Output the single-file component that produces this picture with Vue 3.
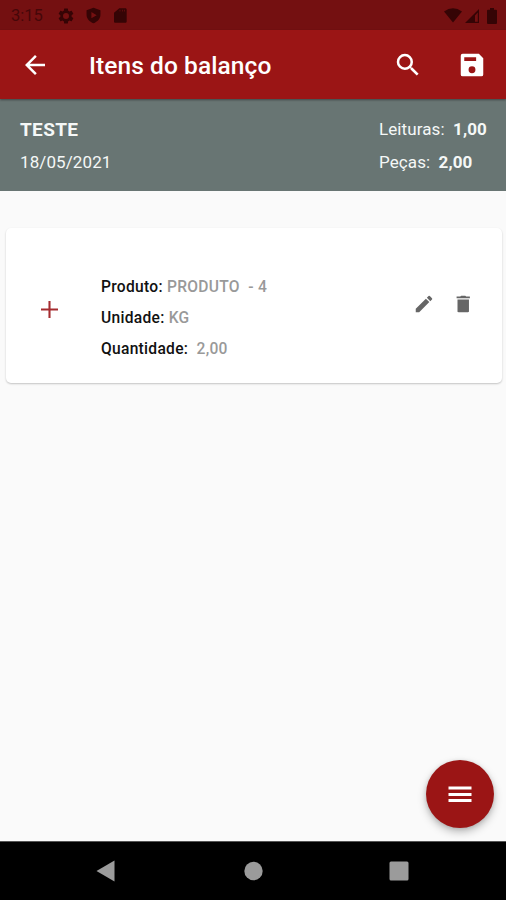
<script setup>
const stats = [
  { label: 'Leituras:', value: '1,00' },
  { label: 'Peças:', value: '2,00' },
]
</script>

<template>
  <div class="screen">
    <header class="status">
      <span class="clock">3:15</span>
      <svg class="s-gear" viewBox="0 0 24 24"><path fill-rule="evenodd" d="M19.43 12.98c.04-.32.07-.64.07-.98s-.03-.66-.07-.98l2.11-1.65c.19-.15.24-.42.12-.64l-2-3.46c-.12-.22-.39-.3-.61-.22l-2.49 1c-.52-.4-1.08-.73-1.69-.98l-.38-2.65A.49.49 0 0 0 14 2h-4c-.25 0-.46.18-.49.42l-.38 2.65c-.61.25-1.17.59-1.69.98l-2.49-1c-.23-.09-.49 0-.61.22l-2 3.46c-.13.22-.07.49.12.64l2.11 1.65c-.04.32-.07.65-.07.98s.03.66.07.98l-2.11 1.65c-.19.15-.24.42-.12.64l2 3.46c.12.22.39.3.61.22l2.49-1c.52.4 1.08.73 1.69.98l.38 2.65c.03.24.24.42.49.42h4c.25 0 .46-.18.49-.42l.38-2.65c.61-.25 1.17-.59 1.69-.98l2.49 1c.23.09.49 0 .61-.22l2-3.46c.12-.22.07-.49-.12-.64zM12 16a4 4 0 1 1 0-8 4 4 0 0 1 0 8z" /></svg>
      <svg class="s-shield" viewBox="0 0 24 24"><path fill-rule="evenodd" d="M12 1 2.200 4.500V11c0 5.500 4.300 10 9.800 12 5.500-2 9.800-6.500 9.800-12V4.500zM9 7 16.500 11.500 9 16z" /></svg>
      <svg class="s-sd" viewBox="0 0 24 24"><path d="M20 1h-9L3 8v13c0 1.100.9 2 2 2h15c1.100 0 2-.9 2-2V3c0-1.100-.9-2-2-2zm-7.500 5h-1V3.500h1zm3.500 0h-1V3.500h1zm3.500 0h-1V3.500h1z" /></svg>
      <span class="grow"></span>
      <svg class="s-wifi" viewBox="0 0 18 15"><path d="M0 3.500Q9-3 18 3.500L9 14.500z" /></svg>
      <svg class="s-signal" viewBox="0 0 14 14"><path fill-rule="evenodd" d="M14 0v14H0zM12.800 3.500 10 6.500v6.300h2.800z" /></svg>
      <svg class="s-battery" viewBox="0 0 10 16"><path d="M3 0h4v1.800h2q1 0 1 1V15q0 1-1 1H1q-1 0-1-1V2.800q0-1 1-1h2z" /></svg>
    </header>

    <nav class="toolbar">
      <svg class="icon back" viewBox="0 0 24 24"><path d="M20 11H7.830l5.590-5.590L12 4l-8 8 8 8 1.410-1.410L7.830 13H20z" /></svg>
      <h1>Itens do balanço</h1>
      <svg class="icon search" viewBox="0 0 24 24"><path d="M15.500 14h-.79l-.28-.27A6.470 6.470 0 0 0 16 9.500 6.500 6.500 0 1 0 9.500 16c1.610 0 3.090-.59 4.230-1.570l.27.28v.79l5 4.990L20.490 19zm-6 0a4.500 4.500 0 1 1 0-9 4.500 4.500 0 0 1 0 9z" /></svg>
      <svg class="icon save" viewBox="0 0 24 24"><path fill-rule="evenodd" d="M17.500 3H4.500A1.500 1.500 0 0 0 3 4.500v15A1.500 1.500 0 0 0 4.500 21h15a1.500 1.500 0 0 0 1.500-1.500v-13zM5.800 5.700h9.500v3H5.800zM12 18.500a2.750 2.750 0 1 1 0-5.500 2.750 2.750 0 0 1 0 5.500z" /></svg>
    </nav>

    <section class="summary">
      <div class="info">
        <strong>TESTE</strong>
        <span>18/05/2021</span>
      </div>
      <div class="stats">
        <p v-for="s in stats" :key="s.label">{{ s.label }} <b>{{ s.value }}</b></p>
      </div>
    </section>

    <main>
      <article class="card">
        <svg class="plus" viewBox="0 0 18 18"><path d="M9 0v18M0 9h18" /></svg>
        <div class="fields">
          <p>Produto: <span>PRODUTO&nbsp; - 4</span></p>
          <p>Unidade: <span>KG</span></p>
          <p>Quantidade: <span>&nbsp;2,00</span></p>
        </div>
        <svg class="action" viewBox="0 0 24 24"><path d="M3 17.250V21h3.750L17.810 9.940l-3.750-3.750zM20.710 7.040a1 1 0 0 0 0-1.410l-2.340-2.340a1 1 0 0 0-1.410 0l-1.830 1.830 3.750 3.750z" /></svg>
        <svg class="action" viewBox="0 0 24 24"><path d="M6 20c0 .6.500 1 1 1h10.500c.5 0 1-.4 1-1V7H6zM19.500 3.800h-4l-1-.8H10l-1 .8H5v2h14.500z" /></svg>
      </article>
      <button class="fab" aria-label="Menu">
        <svg viewBox="0 0 24 17"><path d="M.5 2h23M.5 8.500h23M.5 14.500h23" /></svg>
      </button>
    </main>

    <footer class="navbar">
      <svg viewBox="0 0 20 22"><path d="M18.500 .5v21L0.500 11z" /></svg>
      <svg viewBox="0 0 20 22"><circle cx="10.500" cy="11" r="9.200" /></svg>
      <svg viewBox="0 0 20 22"><rect x=".5" y="1.500" width="19" height="19" rx="1.500" /></svg>
    </footer>
  </div>
</template>

<style>
body { margin: 0; }
</style>

<style scoped>
* { box-sizing: border-box; }
p, h1 { margin: 0; }
svg { display: block; flex: none; fill: currentColor; }
.screen { width: 506px; height: 900px; display: flex; flex-direction: column; overflow: hidden; background: #fafafa; font-family: Roboto, sans-serif; }
.status { flex: none; height: 30px; display: flex; align-items: center; padding: 1px 9px 0 11px; background: #741011; color: #350405; }
.clock { width: 46px; font-size: 16.500px; line-height: 20px; padding-top: 1px; color: #450709; }
.s-gear { width: 18px; height: 18px; margin-right: 10px; }
.s-shield { width: 17px; height: 17px; margin-right: 10px; }
.s-sd { width: 16px; height: 17px; }
.grow { flex: 1; }
.s-wifi { width: 18px; height: 15px; margin-right: 3px; }
.s-signal { width: 14px; height: 14px; margin-right: 8px; }
.s-battery { width: 10px; height: 16px; }
.toolbar { flex: none; height: 69px; display: flex; align-items: center; padding: 0 19px 0 20px; background: #9b1515; color: #fff; position: relative; z-index: 1; box-shadow: 0 1px 2px rgba(0, 0, 0, .4); }
.icon { width: 30px; height: 30px; }
.save { margin-left: 34px; }
h1 { flex: 1; padding-left: 39px; padding-top: 2px; font-size: 24.500px; line-height: 30px; letter-spacing: .08px; font-weight: 500; white-space: nowrap; }
.summary { flex: none; height: 92px; display: flex; justify-content: space-between; padding: 15px 19px 0 20px; background: #687573; color: #f5f8f7; }
.info { display: flex; flex-direction: column; }
.info strong { font-size: 19px; line-height: 32px; letter-spacing: .35px; font-weight: 700; }
.info span { font-size: 17px; line-height: 32px; letter-spacing: .1px; }
.stats { width: 108px; font-size: 17px; letter-spacing: .1px; white-space: nowrap; }
.stats p { line-height: 30px; padding-bottom: 3px; }
.stats b { margin-left: 4px; font-weight: 700; }
main { flex: 1; position: relative; padding: 37px 4px 0 6px; }
.card { height: 155px; display: flex; align-items: center; padding: 0 28px 0 35px; background: #fff; border-radius: 5px; box-shadow: 0 1px 2px rgba(0, 0, 0, .22); }
.plus { width: 17px; height: 17px; margin-top: 8px; fill: none; stroke: #a52c30; stroke-width: 2.200; }
.fields { flex: 1; padding-left: 43px; padding-top: 26px; }
.fields p { font-size: 15.600px; line-height: 30.700px; letter-spacing: .28px; font-weight: 500; color: #111; white-space: nowrap; }
.fields span { color: #999; }
.action { width: 22px; height: 22px; color: #666; margin-left: 17px; margin-bottom: 4px; }
.fab { position: absolute; right: 12px; bottom: 13px; width: 68px; height: 68px; display: grid; place-items: center; padding: 0; border: 0; border-radius: 50%; background: #9b1515; color: #fff; box-shadow: 0 4px 8px rgba(0, 0, 0, .25), 0 1px 4px rgba(0, 0, 0, .12); }
.fab svg { width: 24px; height: 17px; fill: none; stroke: #fff; stroke-width: 2.800; }
.navbar { flex: none; height: 59px; display: flex; align-items: center; justify-content: space-between; padding: 0 97px 0 96px; background: #000; color: #9b9b9b; border-top: 1px solid #555; }
.navbar svg { width: 20px; height: 22px; }
</style>
